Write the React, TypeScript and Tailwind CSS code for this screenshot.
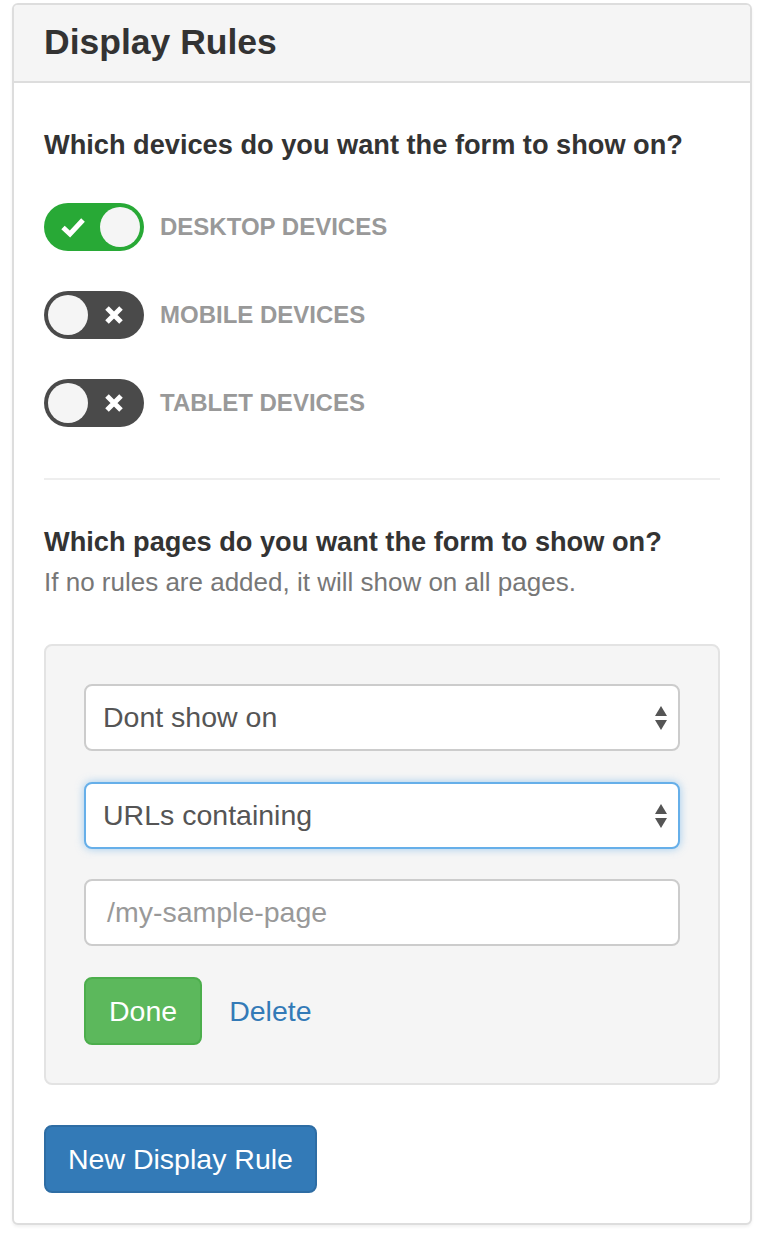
import React from "react";

function Toggle({ on }: { on: boolean }) {
  if (on) {
    return (
      <div className="flex h-[48px] w-[100px] shrink-0 items-center justify-between rounded-full bg-[#28a936] pl-[16px] pr-[4px]">
        <svg width="26" height="22" viewBox="0 0 26 22">
          <path d="M3 11.5 L10 18 L23 4" fill="none" stroke="#fff" strokeWidth="5" />
        </svg>
        <div className="h-[40px] w-[40px] rounded-full bg-[#f5f5f5]" />
      </div>
    );
  }
  return (
    <div className="flex h-[48px] w-[100px] shrink-0 items-center justify-between rounded-full bg-[#4a4a4a] pl-[4px] pr-[20px]">
      <div className="h-[40px] w-[40px] rounded-full bg-[#f5f5f5]" />
      <svg width="20" height="20" viewBox="0 0 20 20">
        <path d="M3 3 L17 17 M17 3 L3 17" fill="none" stroke="#fff" strokeWidth="5" />
      </svg>
    </div>
  );
}

function Arrows() {
  return (
    <svg width="14" height="26" viewBox="0 0 14 26">
      <path d="M7 1 L13 11 L1 11 Z" fill="#555" />
      <path d="M1 15 L13 15 L7 25 Z" fill="#555" />
    </svg>
  );
}

const devices = [
  { label: "DESKTOP DEVICES", on: true },
  { label: "MOBILE DEVICES", on: false },
  { label: "TABLET DEVICES", on: false },
];

export default function App() {
  return (
    <div className="min-h-[1236px] bg-white pl-[12px] pt-[3px] font-['Liberation_Sans',Arial,sans-serif]">
      <div className="w-[740px] overflow-hidden rounded-[6px] border-2 border-[#dddddd] bg-white shadow-[0_2px_3px_rgba(0,0,0,0.06)]">
        <div className="flex h-[78px] items-center border-b-2 border-[#dddddd] bg-[#f5f5f5] px-[30px]">
          <h3 className="text-[35.5px] font-bold leading-none text-[#333]">Display Rules</h3>
        </div>
        <div className="px-[30px] pb-[30px] pt-[46px]">
          <p className="text-[27.2px] font-bold leading-[32px] text-[#333]">
            Which devices do you want the form to show on?
          </p>
          <div className="mt-[42px] flex flex-col gap-[40px]">
            {devices.map((d) => (
              <div key={d.label} className="flex items-center gap-[16px]">
                <Toggle on={d.on} />
                <span className="text-[24px] font-bold text-[#999]">{d.label}</span>
              </div>
            ))}
          </div>
          <hr className="mt-[51px] border-t-2 border-[#eeeeee]" />
          <p className="mt-[46px] text-[27.2px] font-bold leading-[32px] text-[#333]">
            Which pages do you want the form to show on?
          </p>
          <p className="mt-[8px] text-[26px] leading-[32px] text-[#777]">
            If no rules are added, it will show on all pages.
          </p>
          <div className="mt-[46px] rounded-[8px] border-2 border-[#e3e3e3] bg-[#f5f5f5] p-[38px]">
            <div className="flex h-[67px] items-center justify-between rounded-[8px] border-2 border-[#cccccc] bg-white pl-[17px] pr-[10px] text-[28.5px] text-[#555]">
              <span>Dont show on</span>
              <Arrows />
            </div>
            <div className="mt-[31px] flex h-[67px] items-center justify-between rounded-[8px] border-2 border-[#66afe9] bg-white pl-[17px] pr-[10px] text-[28.5px] text-[#555] shadow-[0_0_8px_rgba(102,175,233,0.6)]">
              <span>URLs containing</span>
              <Arrows />
            </div>
            <div className="mt-[30px] flex h-[67px] items-center rounded-[8px] border-2 border-[#cccccc] bg-white pl-[21px] text-[28.5px] text-[#999]">
              /my-sample-page
            </div>
            <div className="mt-[31px] flex items-center gap-[27px]">
              <button className="h-[68px] rounded-[8px] border-2 border-[#4cae4c] bg-[#5cb85c] px-[23px] text-[28.5px] text-white">
                Done
              </button>
              <span className="text-[28.5px] text-[#337ab7]">Delete</span>
            </div>
          </div>
          <button className="mt-[40px] h-[68px] rounded-[8px] border-2 border-[#2e6da4] bg-[#337ab7] px-[22px] text-[28.5px] text-white">
            New Display Rule
          </button>
        </div>
      </div>
    </div>
  );
}
